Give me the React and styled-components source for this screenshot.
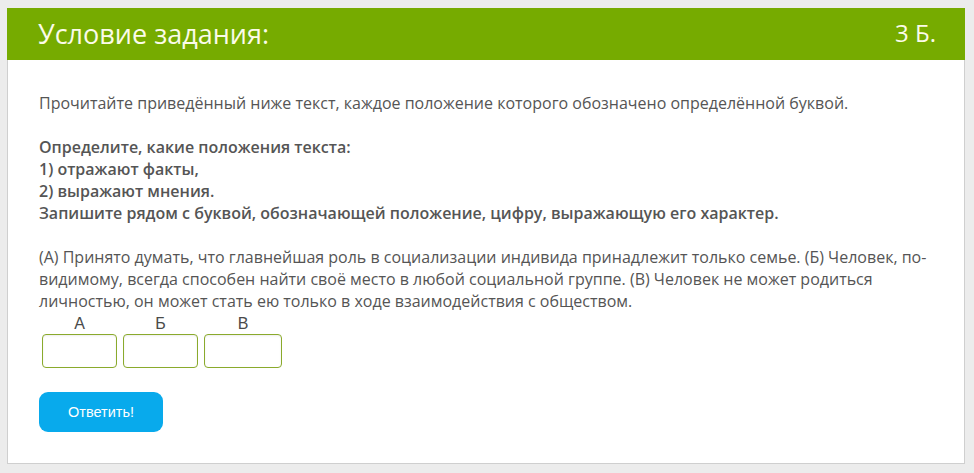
import React from "react";
import styled, { createGlobalStyle } from "styled-components";

const GlobalStyle = createGlobalStyle`
  html, body {
    margin: 0;
    padding: 0;
    background: #ececec;
  }
  body {
    font-family: "Open Sans", "Noto Sans", sans-serif;
  }
`;

const Page = styled.div`
  padding: 8px 0 9px 7px;
  width: 965px;
  box-sizing: border-box;
`;

const Card = styled.div`
  background: #fff;
  border: 1px solid #cfcfcf;
  border-top: none;
  height: 456px;
  box-sizing: border-box;
`;

const Header = styled.div`
  background: #76ab00;
  height: 52px;
  display: flex;
  align-items: center;
  justify-content: space-between;
  padding: 0 29px 2px 31px;
  margin: 0 -1px;
  color: #fbfbe9;
  font-size: 27px;
  line-height: 1;
  box-sizing: border-box;
`;

const Points = styled.span`
  font-size: 24px;
`;

const Body = styled.div`
  padding: 32px 31px 0;
  color: #555;
  font-size: 16px;
  line-height: 22px;
`;

const Para = styled.p`
  margin: 0 0 22px;
  font-weight: ${(p) => (p.$bold ? 600 : 400)};
`;

const Answers = styled.div`
  display: flex;
  gap: 6px;
  margin: -22px 0 0 3px;
`;

const Cell = styled.div`
  display: flex;
  flex-direction: column;
  align-items: center;
`;

const Letter = styled.span`
  font-family: "Liberation Sans", Arial, sans-serif;
  font-size: 16px;
  line-height: 23px;
  color: #4a4a4a;
`;

const Field = styled.input`
  width: ${(p) => p.$w}px;
  height: 34px;
  box-sizing: border-box;
  border: 1px solid #8aaa2c;
  border-radius: 4px;
  background: #fff;
  box-shadow: inset 0 1px 2px rgba(0, 0, 0, 0.08);
  margin-top: -1px;
`;

const Submit = styled.button`
  margin-top: 24px;
  width: 124px;
  height: 40px;
  border: none;
  border-radius: 9px;
  background: #08aaec;
  color: #fff;
  font-family: "Liberation Sans", Arial, sans-serif;
  font-size: 14.5px;
`;

export default function App() {
  return (
    <>
      <GlobalStyle />
      <Page>
        <Card>
          <Header>
            <span>Условие задания:</span>
            <Points>3 Б.</Points>
          </Header>
          <Body>
            <Para>
              Прочитайте приведённый ниже текст, каждое положение которого обозначено определённой буквой.
            </Para>
            <Para $bold>
              Определите, какие положения текста:
              <br />
              1) отражают факты,
              <br />
              2) выражают мнения.
              <br />
              Запишите рядом с буквой, обозначающей положение, цифру, выражающую его характер.
            </Para>
            <Para>
              (А) Принято думать, что главнейшая роль в социализации индивида принадлежит только семье. (Б) Человек, по-видимому, всегда способен найти своё место в любой социальной группе. (В) Человек не может родиться личностью, он может стать ею только в ходе взаимодействия с обществом.
            </Para>
            <Answers>
              <Cell>
                <Letter>А</Letter>
                <Field $w={75} />
              </Cell>
              <Cell>
                <Letter>Б</Letter>
                <Field $w={75} />
              </Cell>
              <Cell>
                <Letter>В</Letter>
                <Field $w={78} />
              </Cell>
            </Answers>
            <Submit>Ответить!</Submit>
          </Body>
        </Card>
      </Page>
    </>
  );
}
